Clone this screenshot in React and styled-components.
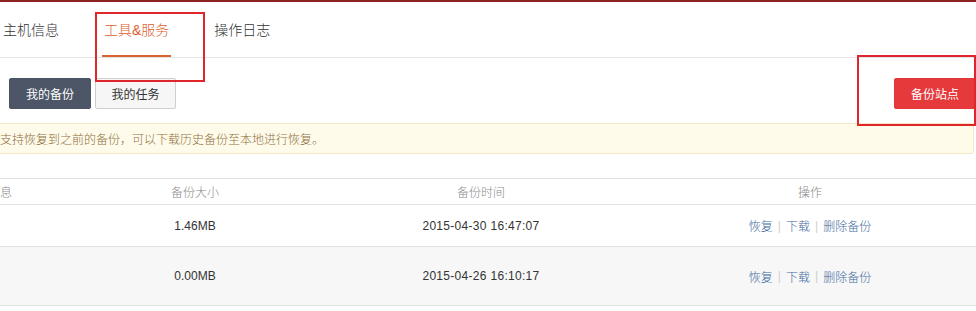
import React from 'react';
import styled, { createGlobalStyle } from 'styled-components';

const GlobalStyle = createGlobalStyle`
    html, body {
        margin: 0;
        padding: 0;
        background: #fff;
    }
    body {
        font-family: "Liberation Sans", "Noto Sans CJK SC", sans-serif;
        font-weight: 300;
        color: #333;
        width: 976px;
        overflow: hidden;
    }
`;

const Page = styled.div`
    position: relative;
    width: 976px;
    height: 311px;
    overflow: hidden;
    border-top: 2px solid #8e2124;
    box-sizing: border-box;
`;

const TabBar = styled.div`
    display: flex;
    align-items: stretch;
    height: 55px;
    padding-left: 1px;
    border-bottom: 1px solid #e3e3e3;
`;

const Tab = styled.div`
    display: flex;
    align-items: center;
    padding: 0 2px 2px;
    margin-right: 41px;
    font-size: 14px;
    color: ${p => (p.$active ? '#e0602f' : '#333')};
    box-shadow: ${p => (p.$active ? 'inset 0 -2px 0 #d9622e' : 'none')};
`;

const Toolbar = styled.div`
    display: flex;
    align-items: center;
    gap: 4px;
    padding: 20px 0 14px 9px;
`;

const Button = styled.button`
    height: 31px;
    width: ${p => p.$w || 82}px;
    border-radius: 2px;
    font-family: inherit;
    font-weight: 400;
    font-size: 12px;
    cursor: pointer;
    border: 1px solid ${p => (p.$kind === 'dark' ? '#4a5464' : p.$kind === 'red' ? '#e3373a' : '#cfcfcf')};
    background: ${p => (p.$kind === 'dark' ? '#4c5666' : p.$kind === 'red' ? '#e5393c' : '#f6f6f6')};
    color: ${p => (p.$kind === 'light' ? '#333' : '#fff')};
    padding: 0;
`;

const Spacer = styled.div`
    flex: 1;
`;

const Notice = styled.div`
    height: 31px;
    width: 974px;
    box-sizing: border-box;
    display: flex;
    align-items: center;
    background: #fffbea;
    border: 1px solid #f2e8c4;
    border-left: none;
    border-radius: 0 3px 3px 0;
    font-size: 12px;
    color: #8d7142;
`;

const Table = styled.div`
    margin-top: 24px;
    border-top: 1px solid #e2e2e2;
`;

const Row = styled.div`
    display: grid;
    grid-template-columns: 72px 246px 326px 1fr;
    align-items: center;
    height: ${p => p.$h}px;
    border-bottom: 1px solid #e2e2e2;
    background: ${p => (p.$shade ? '#f7f7f7' : '#fff')};
    font-size: 12px;
    color: ${p => (p.$head ? '#8a8a8a' : '#333')};
`;

const Cell = styled.div`
    text-align: ${p => (p.$left ? 'left' : 'center')};
    white-space: nowrap;
    letter-spacing: ${p => (p.$wide ? '0.3px' : '0')};
`;

const Actions = styled.div`
    display: flex;
    justify-content: center;
    align-items: center;
    gap: 5px;
`;

const ActionLink = styled.a`
    color: #3f6aa0;
    text-decoration: none;
    cursor: pointer;
`;

const Sep = styled.span`
    color: #cfcfcf;
`;

const Annotation = styled.div`
    position: absolute;
    border: 2px solid #e0262a;
    box-sizing: border-box;
    pointer-events: none;
`;

const rows = [
    { size: '1.46MB', time: '2015-04-30 16:47:07', h: 41 },
    { size: '0.00MB', time: '2015-04-26 16:10:17', h: 58, shade: true },
];

export default function App() {
    return (
        <>
            <GlobalStyle />
            <Page>
                <TabBar>
                    <Tab>主机信息</Tab>
                    <Tab $active>工具&amp;服务</Tab>
                    <Tab>操作日志</Tab>
                </TabBar>

                <Toolbar>
                    <Button $kind="dark">我的备份</Button>
                    <Button $kind="light" $w={81}>我的任务</Button>
                    <Spacer />
                    <Button $kind="red">备份站点</Button>
                </Toolbar>

                <Notice>支持恢复到之前的备份，可以下载历史备份至本地进行恢复。</Notice>

                <Table>
                    <Row $head $h={25}>
                        <Cell $left>息</Cell>
                        <Cell>备份大小</Cell>
                        <Cell>备份时间</Cell>
                        <Cell>操作</Cell>
                    </Row>
                    {rows.map((r) => (
                        <Row key={r.time} $h={r.h} $shade={r.shade}>
                            <Cell $left></Cell>
                            <Cell>{r.size}</Cell>
                            <Cell $wide>{r.time}</Cell>
                            <Actions>
                                <ActionLink>恢复</ActionLink>
                                <Sep>|</Sep>
                                <ActionLink>下载</ActionLink>
                                <Sep>|</Sep>
                                <ActionLink>删除备份</ActionLink>
                            </Actions>
                        </Row>
                    ))}
                </Table>

                <Annotation style={{ left: 95, top: 10, width: 110, height: 70 }} />
                <Annotation style={{ left: 857, top: 53, width: 119, height: 71 }} />
            </Page>
        </>
    );
}
